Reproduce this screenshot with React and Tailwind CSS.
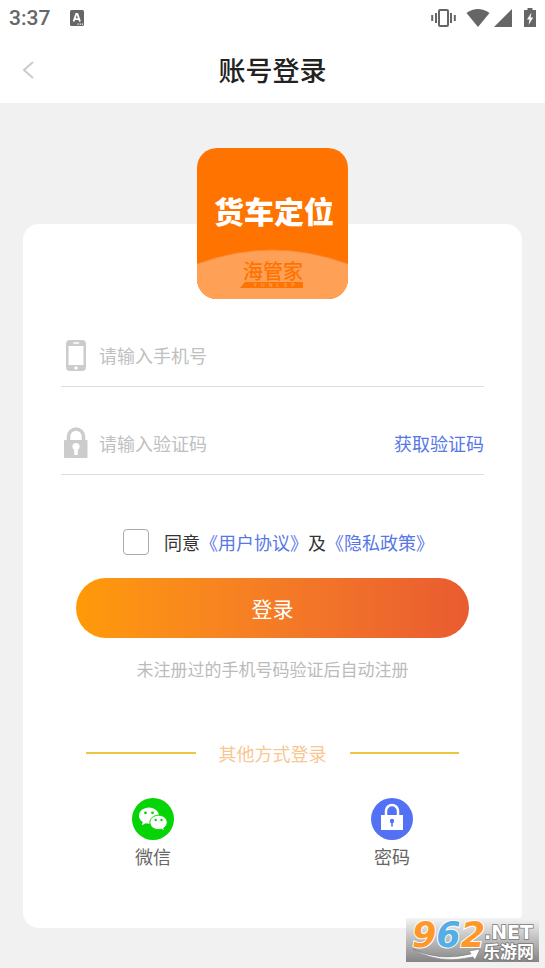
import React from "react";

function StatusBar() {
  return (
    <div className="flex h-9 items-center justify-between px-[9px] text-[#666666]">
      <div className="flex items-center gap-5">
        <span className="font-['Roboto'] text-[21px] leading-6 font-medium">3:37</span>
        <svg width="15" height="16" viewBox="0 0 15 16">
          <rect width="14" height="16" rx="1.5" fill="currentColor" />
          <path d="M3.600 11.500 6.200 4h1.200l2.600 7.500M4.800 9.200h4" fill="none" stroke="#fff" strokeWidth="1.800" />
          <path d="M7.500 14.200h1.200M9.700 14.200h1.200M11.800 14.200H13" stroke="#fff" strokeWidth="1.200" />
        </svg>
      </div>
      <div className="flex items-center">
        <svg width="25" height="20" viewBox="0 0 25 20" fill="none" stroke="currentColor">
          <rect x="8" y="2" width="9" height="16" rx="1" strokeWidth="2" />
          <path d="M5 5v10M20 5v10" strokeWidth="2" />
          <path d="M1.200 7v6M23.800 7v6" strokeWidth="2" />
        </svg>
        <svg className="ml-[10px]" width="24" height="20" viewBox="0 0 24 20" fill="currentColor">
          <path d="M12 19 .5 5Q12-3 23.500 5Z" />
        </svg>
        <svg className="ml-1" width="18" height="20" viewBox="0 0 18 20" fill="currentColor">
          <path d="M18 1v18H0Z" />
        </svg>
        <svg className="ml-3" width="12" height="20" viewBox="0 0 12 20">
          <path d="M3.500 0h5v2H12v17H0V2h3.500Z" fill="currentColor" />
          <path d="M7.500 4.500 3 11.500h2.500L4.500 17 9.200 9.500H6.500Z" fill="#fff" />
        </svg>
      </div>
    </div>
  );
}

function Logo() {
  return (
    <div className="relative mx-auto -mt-[76px] h-[151px] w-[151px] overflow-hidden rounded-[20px] bg-[#ff7300]">
      <svg className="absolute inset-0" width="151" height="151" viewBox="0 0 151 151">
        <path d="M0 116Q75 88 151 116V151H0Z" fill="#ffa057" />
        <path d="M0 116Q75 88 151 116" fill="none" stroke="#f58a38" />
        <text
          x="77"
          y="75"
          textAnchor="middle"
          fontFamily="'Noto Sans CJK SC', sans-serif"
          fontSize="30"
          fontWeight="900"
          fill="#fff"
        >
          货车定位
        </text>
        <text
          x="76"
          y="131"
          textAnchor="middle"
          fontFamily="'Noto Sans CJK SC', sans-serif"
          fontSize="20"
          fontWeight="500"
          fill="#ff7300"
        >
          海管家
        </text>
        <path d="M48 134h58v6H43Z" fill="#ff7300" />
        <text
          x="77"
          y="139"
          textAnchor="middle"
          fontFamily="'Liberation Sans', sans-serif"
          fontSize="5"
          fontWeight="700"
          fill="#ffa057"
        >
          {"Y\u00a0\u00a0\u00a0U\u00a0\u00a0\u00a0N\u00a0\u00a0\u00a0L\u00a0\u00a0\u00a0S\u00a0\u00a0\u00a0P"}
        </text>
      </svg>
    </div>
  );
}

function PhoneIcon() {
  return (
    <svg width="30" height="32" viewBox="0 0 30 32">
      <rect x="5" y="1" width="20" height="31" rx="4" fill="#cccccc" />
      <path d="M7.500 7h15v19h-15Z" fill="#fff" />
      <path d="M13 4h4.500" stroke="#fff" strokeWidth="1.500" strokeLinecap="round" />
      <circle cx="15" cy="29" r="1.700" fill="#fff" />
    </svg>
  );
}

function LockIcon() {
  return (
    <svg width="30" height="32" viewBox="0 0 30 32">
      <path d="M7.500 14V9.500a7.500 7.500 0 0 1 15 0V14" fill="none" stroke="#cccccc" strokeWidth="3.500" />
      <rect x="3" y="13" width="23.500" height="18" rx="1" fill="#cccccc" />
      <circle cx="15" cy="19.500" r="3.600" fill="#fff" />
      <path d="M13.200 21h3.600v7h-3.600Z" fill="#fff" />
    </svg>
  );
}

function WechatIcon() {
  return (
    <svg width="42" height="42" viewBox="0 0 42 42">
      <circle cx="21" cy="21" r="21" fill="#06d406" />
      <path
        d="M17 9.500c-5.500 0-10 3.600-10 8.200 0 2.600 1.500 4.900 3.800 6.400l-1 3.200 3.900-2c1 .3 2.100.5 3.300.5 5.500 0 10-3.600 10-8.100s-4.500-8.200-10-8.200Z"
        fill="#fff"
      />
      <path
        d="M26.500 17.200c-4.800 0-8.600 3.200-8.600 7.200s3.800 7.200 8.600 7.200c1 0 2-.2 2.900-.4l3.100 1.700-.8-2.800c2.200-1.300 3.500-3.400 3.500-5.700 0-4-3.900-7.200-8.700-7.200Z"
        fill="#fff"
        stroke="#06d406"
        strokeWidth="1"
      />
      <g fill="#06d406">
        <circle cx="13.500" cy="14.800" r="1.400" />
        <circle cx="20.500" cy="14.800" r="1.400" />
        <circle cx="23.700" cy="22" r="1.200" />
        <circle cx="29.500" cy="22" r="1.200" />
      </g>
    </svg>
  );
}

function PasswordIcon() {
  return (
    <svg width="42" height="42" viewBox="0 0 42 42">
      <circle cx="21" cy="21" r="21" fill="#5271f5" />
      <path d="M15 18v-5a6 6 0 0 1 12 0v5" fill="none" stroke="#fff" strokeWidth="2.500" />
      <path d="M10 17h22v15H10Z" fill="#fff" />
      <circle cx="21" cy="23" r="2.200" fill="#5271f5" />
      <path d="M20.200 24h1.600v4.500h-1.600Z" fill="#5271f5" />
    </svg>
  );
}

function Watermark() {
  return (
    <svg
      className="absolute right-[6px] bottom-[6px] overflow-visible"
      width="133"
      height="44"
      viewBox="0 0 133 44"
    >
      <defs>
        <linearGradient id="plate" x1="0" y1="0" x2="0" y2="1">
          <stop offset="0" stopColor="#f4f4f4" />
          <stop offset="1" stopColor="#858585" />
        </linearGradient>
      </defs>
      <rect width="133" height="44" fill="url(#plate)" />
      <path d="M7 31Q34 44 65 36L63 33 74 31 69 42 67 39Q32 47 7 31Z" fill="#fff" stroke="#777" strokeWidth="0.600" />
      <g
        fontFamily="'DejaVu Sans', sans-serif"
        fontWeight="700"
        stroke="#fff"
        strokeWidth="2"
        paintOrder="stroke"
      >
        <text x="6" y="29" fontSize="35" fontStyle="italic" fill="#ff9829">
          9<tspan fill="#55ade5">6</tspan>2
        </text>
        <g fill="#fff" stroke="#777" strokeWidth="1.500">
          <text x="78" y="21" fontSize="19">
            .NET
          </text>
          <text x="77" y="40" fontSize="17" fontFamily="'Noto Sans CJK SC', sans-serif">
            乐游网
          </text>
        </g>
      </g>
    </svg>
  );
}

function App() {
  return (
    <div className="relative min-h-screen bg-[#f1f1f1] pb-10 font-['Noto_Sans_CJK_SC',sans-serif] text-[18px] leading-7">
      <header className="h-[103px] bg-white">
        <StatusBar />
        <div className="grid h-[67px] grid-cols-[56px_1fr_56px] items-center">
          <button type="button" aria-label="返回" className="flex h-full items-center pl-[22px]">
            <svg width="12" height="18" viewBox="0 0 12 18">
              <path d="M11 1 2 9l9 8" fill="none" stroke="#cccccc" strokeWidth="2" />
            </svg>
          </button>
          <h1 className="text-center text-[27px] font-medium text-[#222222]">账号登录</h1>
        </div>
      </header>

      <main className="mx-[23px] mt-[121px] flow-root rounded-2xl bg-white px-[38px] pb-[58px]">
        <Logo />
        <form className="mt-6">
          <div className="flex h-16 items-center border-b border-[#dddddd]">
            <label htmlFor="phone" aria-label="手机号">
              <PhoneIcon />
            </label>
            <input
              type="tel"
              id="phone"
              placeholder="请输入手机号"
              className="ml-2 min-w-0 flex-1 outline-none placeholder:text-[#c0c0c0]"
            />
          </div>
          <div className="mt-6 flex h-16 items-center border-b border-[#dddddd]">
            <label htmlFor="code" aria-label="验证码">
              <LockIcon />
            </label>
            <input
              type="text"
              id="code"
              placeholder="请输入验证码"
              className="ml-2 min-w-0 flex-1 outline-none placeholder:text-[#c0c0c0]"
            />
            <button type="button" className="text-[#5777e6]">
              获取验证码
            </button>
          </div>

          <div className="mt-[53px] flex items-center pl-[62px] text-[#333333]">
            <input
              type="checkbox"
              id="agree"
              className="mr-[15px] h-[26px] w-[26px] appearance-none rounded border border-[#aaaaaa] bg-white"
            />
            <label htmlFor="agree" className="whitespace-nowrap">
              同意
              <a href="#terms" className="text-[#5777e6]">《用户协议》</a>
              及
              <a href="#privacy" className="text-[#5777e6]">《隐私政策》</a>
            </label>
          </div>

          <div className="px-[15px]">
            <button
              type="submit"
              className="mt-[22px] h-[60px] w-full rounded-full bg-linear-to-r from-[#ff9a06] to-[#e95b30] text-[21px] text-white"
            >
              登录
            </button>
          </div>
        </form>
        <p className="mt-[17px] text-center text-[17px] text-[#bbbbbb]">未注册过的手机号码验证后自动注册</p>

        <div className="mt-14 flex items-center gap-[23px] px-[25px]">
          <span className="h-[2px] flex-1 bg-[#f0c541]" />
          <span className="text-[#f8c794]">其他方式登录</span>
          <span className="h-[2px] flex-1 bg-[#f0c541]" />
        </div>

        <div className="mt-[31px] flex justify-between px-[71px] text-[#666666]">
          <button type="button" className="flex flex-col items-center gap-[2px]">
            <WechatIcon />
            微信
          </button>
          <button type="button" className="flex flex-col items-center gap-[2px]">
            <PasswordIcon />
            密码
          </button>
        </div>
      </main>
      <Watermark />
    </div>
  );
}

export default App;
